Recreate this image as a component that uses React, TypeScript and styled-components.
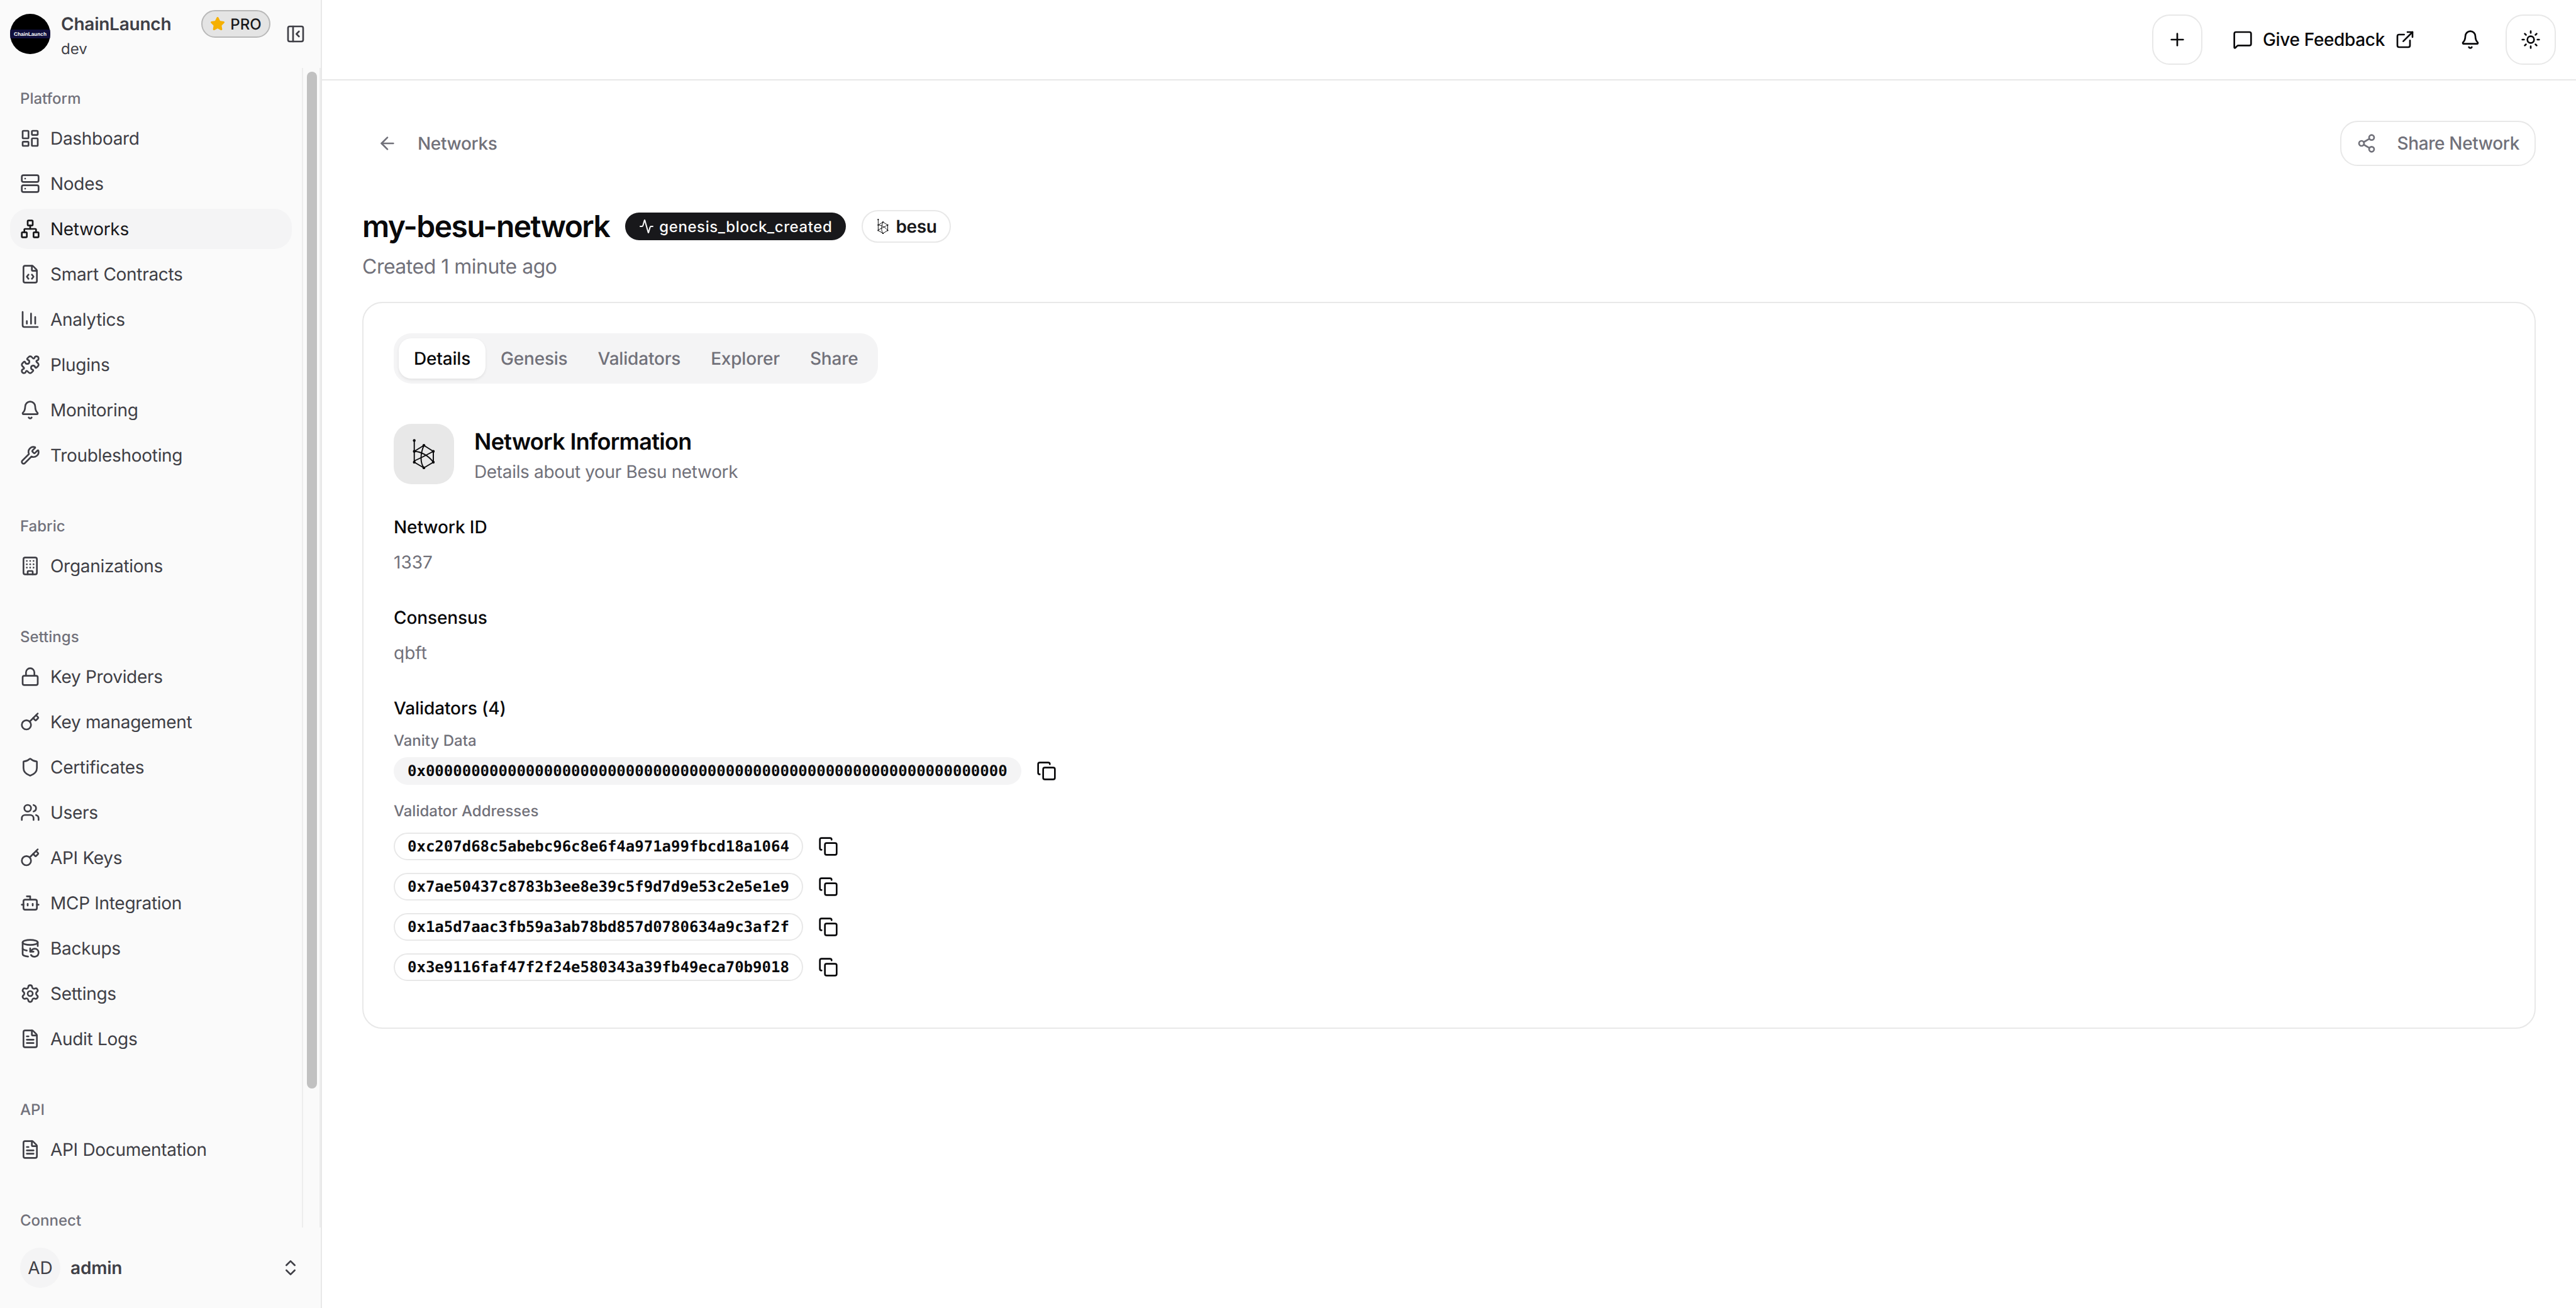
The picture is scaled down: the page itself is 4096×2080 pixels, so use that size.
import React from 'react';
import styled, { createGlobalStyle } from 'styled-components';
import {
  Activity, ArrowLeft, BarChart3, Bell, Bot, Building, ChevronsUpDown, Copy, DatabaseBackup,
  ExternalLink, FileCode, FileText, Key, LayoutDashboard, Lock, MessageSquare, Network,
  PanelLeftClose, Plus, Puzzle, Server, Settings, Share2, Shield, Star, Sun, Users, Wrench,
} from 'lucide-react';

const GlobalStyle = createGlobalStyle`
  html, body { margin: 0; padding: 0; background: #fff; }
  body {
    font-family: Inter, "Noto Sans", sans-serif;
    color: #09090b;
    text-rendering: geometricPrecision;
    -webkit-font-smoothing: antialiased;
  }
  * { box-sizing: border-box; }
  svg { flex: none; }
`;

const Page = styled.div`
  display: flex;
  width: 4096px;
  height: 2080px;
  overflow: hidden;
`;

const Sidebar = styled.aside`
  width: 512px;
  flex: none;
  display: flex;
  flex-direction: column;
  background: #fafafa;
  border-right: 2px solid #e8e8e8;
`;

const Brand = styled.div`
  height: 108px;
  flex: none;
  display: flex;
  align-items: center;
  padding: 0 24px 0 16px;
`;

const LogoSvg = styled.svg`
  width: 64px;
  height: 64px;
  flex: none;
  margin-right: 17px;
`;

const BrandText = styled.div`
  flex: 1;
  display: flex;
  flex-direction: column;
  padding-top: 4px;
  color: #3f3f46;
`;

const BrandName = styled.span`
  font-size: 28px;
  line-height: 40px;
  font-weight: 600;
  letter-spacing: -0.24px;
`;

const BrandEnv = styled.span`
  font-size: 24px;
  line-height: 32px;
  margin-top: 4px;
`;

const ProBadge = styled.span`
  align-self: flex-start;
  margin-top: 16px;
  width: 110px;
  height: 44px;
  margin-right: 24px;
  display: flex;
  align-items: center;
  justify-content: center;
  gap: 8px;
  border: 2px solid #b8b8b8;
  border-radius: 22px;
  background: #e4e4e4;
  color: #18181b;
  font-size: 24px;
  font-weight: 500;
`;

const Collapse = styled.span`
  display: flex;
  color: #3f3f46;
`;

const NavArea = styled.div`
  position: relative;
  flex: 1;
  min-height: 0;
  overflow: hidden;
`;

const Nav = styled.nav`
  width: 480px;
  display: flex;
  flex-direction: column;
  gap: 16px;
`;

const Group = styled.div`
  padding: 16px;
`;

const GroupLabel = styled.div`
  height: 64px;
  padding: 0 16px;
  display: flex;
  align-items: center;
  font-size: 24px;
  font-weight: 500;
  color: #71717a;
`;

const Items = styled.div`
  display: flex;
  flex-direction: column;
  gap: 8px;
`;

const Item = styled.a<{ $active?: boolean }>`
  height: 64px;
  padding: 0 16px;
  display: flex;
  align-items: center;
  gap: 16px;
  border-radius: 28px;
  font-size: 28px;
  letter-spacing: -0.3px;
  color: ${p => (p.$active ? '#18181b' : '#3f3f46')};
  background: ${p => (p.$active ? '#f4f4f5' : 'transparent')};
`;

const ScrollTrack = styled.div`
  position: absolute;
  top: 0;
  bottom: 0;
  left: 480px;
  width: 30px;
  border-left: 2px solid #ededed;
  border-right: 2px solid #ededed;
`;

const ScrollThumb = styled.div`
  position: absolute;
  top: 6px;
  left: 6px;
  width: 16px;
  height: 1617px;
  border-radius: 8px;
  background: #c1c1c1;
`;

const UserFooter = styled.div`
  height: 128px;
  flex: none;
  padding: 32px;
  display: flex;
  align-items: center;
  gap: 16px;
`;

const Avatar = styled.span`
  width: 64px;
  height: 64px;
  border-radius: 50%;
  background: #f4f4f5;
  display: flex;
  align-items: center;
  justify-content: center;
  font-size: 28px;
  color: #3f3f46;
`;

const UserName = styled.span`
  flex: 1;
  font-size: 28px;
  font-weight: 600;
  letter-spacing: -0.2px;
  color: #3f3f46;
`;

const UserChevron = styled.span`
  display: flex;
  color: #3f3f46;
`;

const Main = styled.main`
  flex: 1;
  min-width: 0;
  display: flex;
  flex-direction: column;
`;

const TopBar = styled.header`
  height: 128px;
  flex: none;
  border-bottom: 2px solid #e8e8e8;
  padding: 0 32px;
  display: flex;
  align-items: center;
  justify-content: flex-end;
  gap: 16px;
`;

const IconButton = styled.button<{ $bordered?: boolean }>`
  width: 80px;
  height: 80px;
  padding: 0;
  display: flex;
  align-items: center;
  justify-content: center;
  background: #fff;
  color: #09090b;
  border: 2px solid ${p => (p.$bordered ? '#e8e8e8' : 'transparent')};
  border-radius: 28px;
`;

const FeedbackButton = styled.button`
  height: 80px;
  padding: 0 32px;
  display: flex;
  align-items: center;
  gap: 16px;
  background: #fff;
  border: 0;
  color: #09090b;
  font: 500 28px Inter, sans-serif;
  letter-spacing: -0.34px;
`;

const Content = styled.div`
  padding: 64px 64px 0;
`;

const Crumbs = styled.div`
  display: flex;
  justify-content: space-between;
  align-items: center;
  height: 72px;
  margin-bottom: 64px;
`;

const BackLink = styled.a`
  display: flex;
  align-items: center;
  gap: 32px;
  padding-left: 24px;
  font-size: 28px;
  font-weight: 500;
  letter-spacing: -0.35px;
  color: #71717a;
`;

const ShareButton = styled.button`
  height: 72px;
  padding: 0 24px;
  display: flex;
  align-items: center;
  gap: 32px;
  background: #fff;
  border: 2px solid #e8e8e8;
  border-radius: 28px;
  color: #71717a;
  font: 500 28px Inter, sans-serif;
  letter-spacing: -0.36px;
  white-space: nowrap;
`;

const TitleRow = styled.div`
  height: 64px;
  display: flex;
  align-items: center;
  gap: 25px;
`;

const Title = styled.h1`
  margin: 0;
  font-size: 48px;
  line-height: 64px;
  font-weight: 600;
  letter-spacing: -1.6px;
`;

const StatusBadge = styled.span`
  display: flex;
  align-items: center;
  gap: 8px;
  height: 44px;
  padding: 0 22px;
  border-radius: 22px;
  background: #18181b;
  color: #fafafa;
  font-size: 24px;
  font-weight: 500;
  letter-spacing: 0.6px;
`;

const TypeBadge = styled.span`
  display: flex;
  align-items: center;
  gap: 8px;
  height: 52px;
  padding: 0 20px;
  border: 2px solid #e8e8e8;
  border-radius: 26px;
  background: #fff;
  color: #18181b;
  font-size: 28px;
  font-weight: 600;
  letter-spacing: -0.34px;
`;

const Created = styled.p`
  margin: 8px 0 32px;
  font-size: 32px;
  line-height: 48px;
  letter-spacing: -0.5px;
  color: #71717a;
`;

const Card = styled.section`
  border: 2px solid #e8e8e8;
  border-radius: 32px;
  padding: 48px 48px 64px;
`;

const TabList = styled.div`
  display: inline-flex;
  height: 80px;
  padding: 8px;
  border-radius: 28px;
  background: #f4f4f5;
  margin-bottom: 64px;
  vertical-align: top;
`;

const Tab = styled.span<{ $active?: boolean }>`
  height: 64px;
  padding: 0 24px;
  display: flex;
  align-items: center;
  border-radius: 20px;
  font-size: 28px;
  font-weight: 500;
  letter-spacing: -0.2px;
  color: ${p => (p.$active ? '#09090b' : '#71717a')};
  background: ${p => (p.$active ? '#fff' : 'transparent')};
  box-shadow: ${p => (p.$active ? '0 2px 4px rgba(0,0,0,.08)' : 'none')};
`;

const InfoHead = styled.div`
  display: flex;
  align-items: center;
  gap: 32px;
  margin-bottom: 48px;
`;

const InfoIcon = styled.div`
  width: 96px;
  height: 96px;
  border-radius: 28px;
  background: #e8e8e8;
  display: flex;
  align-items: center;
  justify-content: center;
`;

const InfoTitle = styled.h2`
  margin: 0;
  font-size: 36px;
  line-height: 56px;
  font-weight: 600;
  letter-spacing: -0.7px;
`;

const InfoSub = styled.p`
  margin: 0;
  font-size: 28px;
  line-height: 40px;
  letter-spacing: -0.34px;
  color: #71717a;
`;

const Field = styled.div`
  margin-bottom: 48px;
`;

const FieldLabel = styled.div`
  font-size: 28px;
  line-height: 40px;
  font-weight: 500;
  letter-spacing: -0.1px;
`;

const FieldValue = styled.div`
  margin-top: 16px;
  font-size: 28px;
  line-height: 40px;
  color: #71717a;
`;

const SubLabel = styled.div<{ $gap: number }>`
  margin-top: ${p => p.$gap}px;
  font-size: 24px;
  line-height: 32px;
  color: #71717a;
  font-weight: 500;
`;

const HashRow = styled.div`
  height: 64px;
  display: flex;
  align-items: center;
  gap: 8px;
`;

const HashPill = styled.code<{ $muted?: boolean }>`
  height: 44px;
  padding: 0 20px;
  display: flex;
  align-items: center;
  border-radius: 22px;
  border: 2px solid ${p => (p.$muted ? 'transparent' : '#e8e8e8')};
  background: ${p => (p.$muted ? '#f4f4f5' : '#fff')};
  color: #09090b;
  font-family: "DejaVu Sans Mono", monospace;
  font-size: 24px;
  font-weight: 700;
`;

const CopyButton = styled.span`
  width: 64px;
  height: 64px;
  display: flex;
  align-items: center;
  justify-content: center;
  color: #09090b;
`;

const AddressList = styled.div`
  margin-top: 8px;
`;

const Logo = () => (
  <LogoSvg viewBox="0 0 64 64">
    <defs>
      <clipPath id="logo-clip"><circle cx="32" cy="32" r="32" /></clipPath>
    </defs>
    <g clipPath="url(#logo-clip)">
      <rect width="64" height="64" fill="#000" />
      <rect y="25" width="64" height="14" fill="#100f3c" />
      <text x="32" y="35" textAnchor="middle" fill="#fff" fontFamily="Liberation Sans" fontWeight="700" fontSize="8.2">ChainLaunch</text>
    </g>
  </LogoSvg>
);

const BesuIcon = ({ size }: { size: number }) => (
  <svg width={size} height={size} viewBox="0 0 48 48" fill="none" stroke="#09090b" strokeWidth="1.9">
    <path d="M8.7 2V37L24 46L39 37V19.7L24 10.3L8.7 19.7" />
    <path d="M8.7 19.7C19 20 31 26 39 37" />
    <path d="M39 19.7C31 24 24 28 8.7 35" />
    <path d="M24 46C18 38 18 24 24 10.3" />
    <g fill="#09090b" stroke="none">
      <circle cx="8.7" cy="2.4" r="2.2" />
      <circle cx="8.7" cy="19.7" r="2.2" />
      <circle cx="8.7" cy="37" r="2.2" />
      <circle cx="24" cy="10.3" r="2.2" />
      <circle cx="39" cy="19.7" r="2.2" />
      <circle cx="39" cy="37" r="2.2" />
      <circle cx="24" cy="46" r="2.2" />
    </g>
  </svg>
);

const groups = [
  { label: 'Platform', items: [
    { name: 'Dashboard', Icon: LayoutDashboard },
    { name: 'Nodes', Icon: Server },
    { name: 'Networks', Icon: Network, active: true },
    { name: 'Smart Contracts', Icon: FileCode },
    { name: 'Analytics', Icon: BarChart3 },
    { name: 'Plugins', Icon: Puzzle },
    { name: 'Monitoring', Icon: Bell },
    { name: 'Troubleshooting', Icon: Wrench },
  ] },
  { label: 'Fabric', items: [{ name: 'Organizations', Icon: Building }] },
  { label: 'Settings', items: [
    { name: 'Key Providers', Icon: Lock },
    { name: 'Key management', Icon: Key },
    { name: 'Certificates', Icon: Shield },
    { name: 'Users', Icon: Users },
    { name: 'API Keys', Icon: Key },
    { name: 'MCP Integration', Icon: Bot },
    { name: 'Backups', Icon: DatabaseBackup },
    { name: 'Settings', Icon: Settings },
    { name: 'Audit Logs', Icon: FileText },
  ] },
  { label: 'API', items: [{ name: 'API Documentation', Icon: FileText }] },
  { label: 'Connect', items: [] },
];

const tabs = ['Details', 'Genesis', 'Validators', 'Explorer', 'Share'];

const addresses = [
  '0xc207d68c5abebc96c8e6f4a971a99fbcd18a1064',
  '0x7ae50437c8783b3ee8e39c5f9d7d9e53c2e5e1e9',
  '0x1a5d7aac3fb59a3ab78bd857d0780634a9c3af2f',
  '0x3e9116faf47f2f24e580343a39fb49eca70b9018',
];

export default function App() {
  return (
    <Page>
      <GlobalStyle />
      <Sidebar>
        <Brand>
          <Logo />
          <BrandText>
            <BrandName>ChainLaunch</BrandName>
            <BrandEnv>dev</BrandEnv>
          </BrandText>
          <ProBadge><Star size={24} fill="#f5b000" color="#f5b000" />PRO</ProBadge>
          <Collapse><PanelLeftClose size={32} /></Collapse>
        </Brand>
        <NavArea>
          <Nav>
            {groups.map(g => (
              <Group key={g.label}>
                <GroupLabel>{g.label}</GroupLabel>
                <Items>
                  {g.items.map(({ name, Icon, active }: any) => (
                    <Item key={name} $active={active}><Icon size={32} />{name}</Item>
                  ))}
                </Items>
              </Group>
            ))}
          </Nav>
          <ScrollTrack><ScrollThumb /></ScrollTrack>
        </NavArea>
        <UserFooter>
          <Avatar>AD</Avatar>
          <UserName>admin</UserName>
          <UserChevron><ChevronsUpDown size={32} /></UserChevron>
        </UserFooter>
      </Sidebar>
      <Main>
        <TopBar>
          <IconButton $bordered><Plus size={32} /></IconButton>
          <FeedbackButton><MessageSquare size={32} />Give Feedback<ExternalLink size={32} /></FeedbackButton>
          <IconButton><Bell size={32} /></IconButton>
          <IconButton $bordered><Sun size={32} /></IconButton>
        </TopBar>
        <Content>
          <Crumbs>
            <BackLink><ArrowLeft size={32} />Networks</BackLink>
            <ShareButton><Share2 size={32} />Share Network</ShareButton>
          </Crumbs>
          <TitleRow>
            <Title>my-besu-network</Title>
            <StatusBadge><Activity size={24} />genesis_block_created</StatusBadge>
            <TypeBadge><BesuIcon size={24} />besu</TypeBadge>
          </TitleRow>
          <Created>Created 1 minute ago</Created>
          <Card>
            <TabList>
              {tabs.map((t, i) => <Tab key={t} $active={i === 0}>{t}</Tab>)}
            </TabList>
            <InfoHead>
              <InfoIcon><BesuIcon size={48} /></InfoIcon>
              <div>
                <InfoTitle>Network Information</InfoTitle>
                <InfoSub>Details about your Besu network</InfoSub>
              </div>
            </InfoHead>
            <Field>
              <FieldLabel>Network ID</FieldLabel>
              <FieldValue>1337</FieldValue>
            </Field>
            <Field>
              <FieldLabel>Consensus</FieldLabel>
              <FieldValue>qbft</FieldValue>
            </Field>
            <FieldLabel>Validators (4)</FieldLabel>
            <SubLabel $gap={16}>Vanity Data</SubLabel>
            <HashRow>
              <HashPill $muted>0x{'0'.repeat(64)}</HashPill>
              <CopyButton><Copy size={32} /></CopyButton>
            </HashRow>
            <SubLabel $gap={16}>Validator Addresses</SubLabel>
            <AddressList>
              {addresses.map(a => (
                <HashRow key={a}>
                  <HashPill>{a}</HashPill>
                  <CopyButton><Copy size={32} /></CopyButton>
                </HashRow>
              ))}
            </AddressList>
          </Card>
        </Content>
      </Main>
    </Page>
  );
}
